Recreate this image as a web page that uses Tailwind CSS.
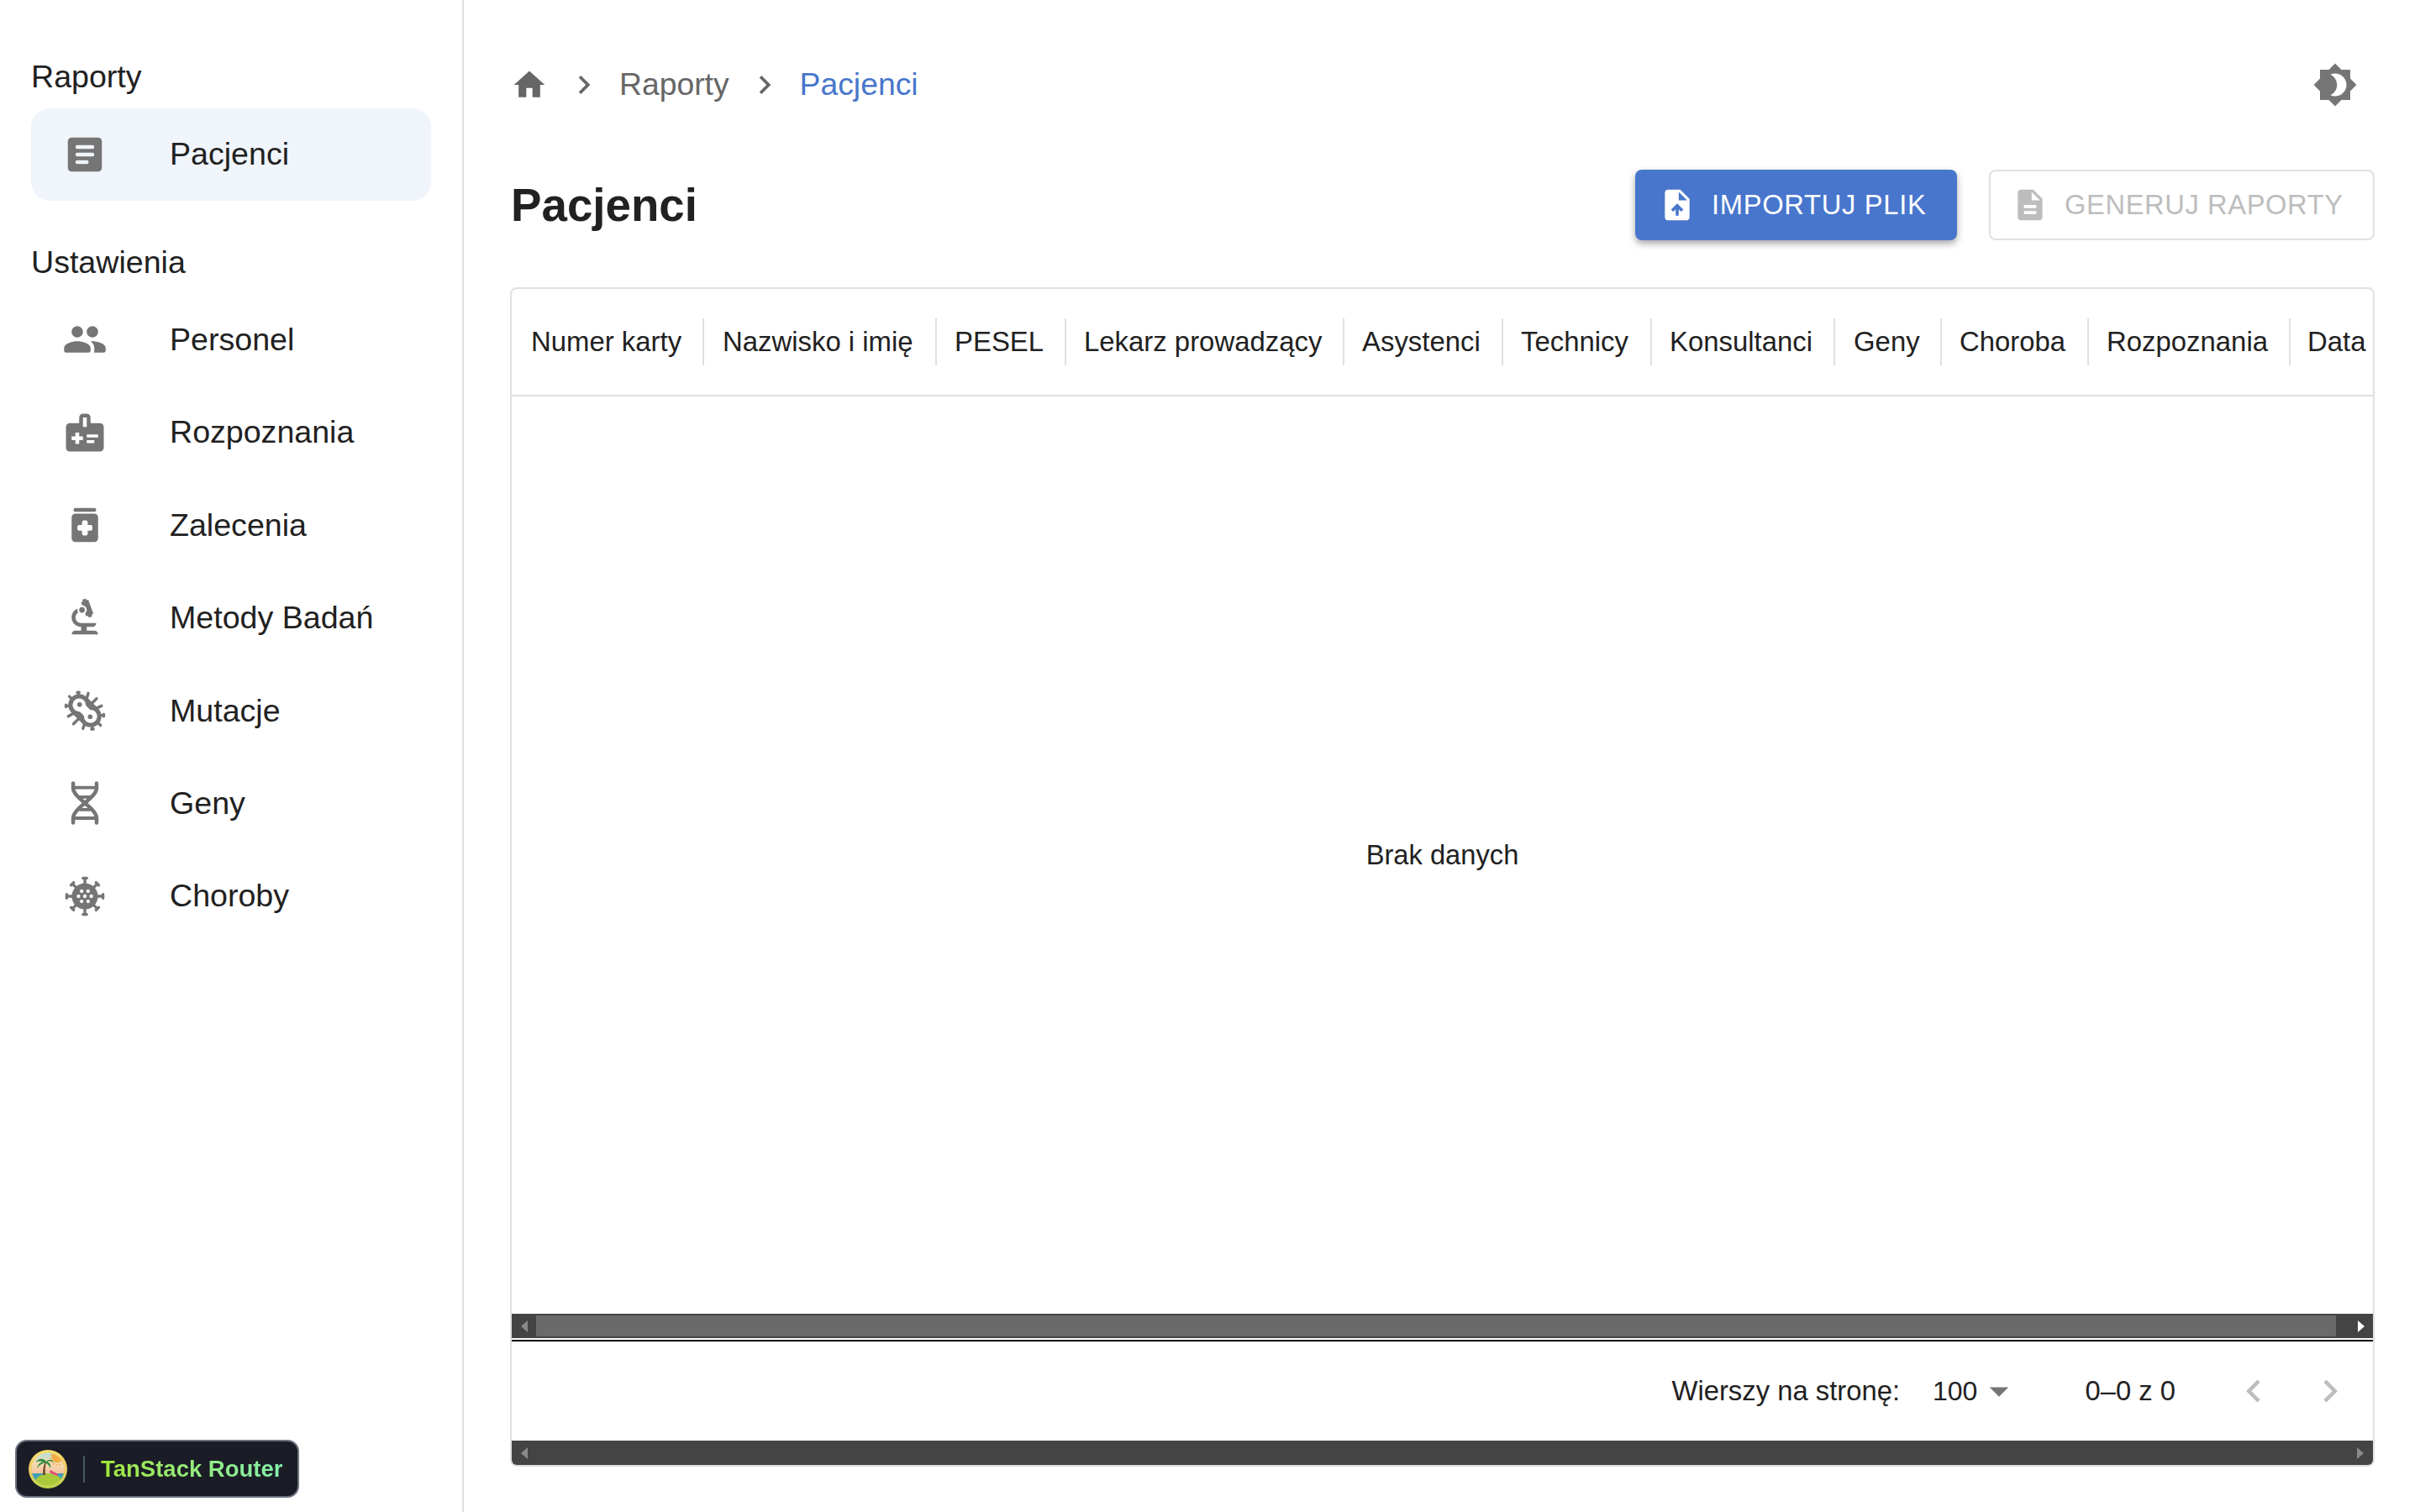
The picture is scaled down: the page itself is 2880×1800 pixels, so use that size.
<!DOCTYPE html>
<html lang="pl">
<head>
<meta charset="utf-8">
<title>Pacjenci</title>
<script src="https://cdn.jsdelivr.net/npm/@tailwindcss/browser@4"></script>
</head>
<body class="bg-white font-['Liberation_Sans',Arial,sans-serif] text-[#212121]">
<div class="flex h-[1800px] w-[2880px] overflow-hidden">
  <aside class="w-[552px] h-full shrink-0 border-r-2 border-[#e0e0e0] pt-[54px] pl-[37px] pr-[37px] text-[37.600px]">
    <div class="h-[74px] flex items-center">Raporty</div>
    <div class="h-[110px] mt-[1px] rounded-[22px] bg-[#f0f4fb] flex items-center pl-[37px] gap-[74px]">
      <svg class="w-[54px] h-[54px] shrink-0" viewBox="0 0 24 24" fill="#757575"><path fill-rule="evenodd" d="M19 3H5c-1.1 0-2 .9-2 2v14c0 1.100.9 2 2 2h14c1.100 0 2-.9 2-2V5c0-1.100-.9-2-2-2zM8 7h8a1 1 0 0 1 0 2H8a1 1 0 0 1 0-2zm0 4h8a1 1 0 0 1 0 2H8a1 1 0 0 1 0-2zm0 4h5a1 1 0 0 1 0 2H8a1 1 0 0 1 0-2z"/></svg>
      <span class="mb-[1px]">Pacjenci</span>
    </div>
    <div class="h-[74px] mt-[36px] flex items-center">Ustawienia</div>
    <div class="h-[110.400px] flex items-center pl-[37px] gap-[74px]">
      <svg class="w-[54px] h-[54px] shrink-0" viewBox="0 0 24 24" fill="#757575"><path d="M16 11c1.660 0 2.990-1.340 2.990-3S17.660 5 16 5s-3 1.340-3 3 1.340 3 3 3m-8 0c1.660 0 2.990-1.340 2.990-3S9.660 5 8 5 5 6.340 5 8s1.340 3 3 3m0 2c-2.330 0-7 1.170-7 3.500V18c0 .55.45 1 1 1h12c.55 0 1-.45 1-1v-1.500C15 14.170 10.330 13 8 13m8 0c-.29 0-.62.02-.97.05.02.01.03.03.04.04 1.140.83 1.930 1.940 1.930 3.410V18c0 .35-.07.69-.18 1H22c.55 0 1-.45 1-1v-1.500c0-2.330-4.670-3.500-7-3.500"/></svg>
      <span>Personel</span>
    </div>
    <div class="h-[110.400px] flex items-center pl-[37px] gap-[74px]">
      <svg class="w-[54px] h-[54px] shrink-0" viewBox="0 0 24 24" fill="#757575"><path fill-rule="evenodd" d="M20 7h-5V4c0-1.100-.9-2-2-2h-2c-1.100 0-2 .9-2 2v3H4c-1.100 0-2 .9-2 2v11c0 1.100.9 2 2 2h16c1.100 0 2-.9 2-2V9c0-1.100-.9-2-2-2zM11 4h2v5h-2V4zm0 12H9v2H7v-2H5v-2h2v-2h2v2h2v2zm2-1.500V13h6v1.500h-6zm0 3V16h4v1.500h-4z"/></svg>
      <span>Rozpoznania</span>
    </div>
    <div class="h-[110.400px] flex items-center pl-[37px] gap-[74px]">
      <svg class="w-[54px] h-[54px] shrink-0" viewBox="0 0 24 24"><rect x="6" y="3" width="12" height="2" rx="1" fill="#757575"/><rect x="5" y="6" width="14" height="15" rx="2" fill="#757575"/><rect x="10.500" y="9.500" width="3" height="8" rx="1" fill="#fff"/><rect x="8" y="12" width="8" height="3" rx="1" fill="#fff"/></svg>
      <span>Zalecenia</span>
    </div>
    <div class="h-[110.400px] flex items-center pl-[37px] gap-[74px]">
      <svg class="w-[54px] h-[54px] shrink-0" viewBox="0 0 24 24" fill="#757575"><path d="M7 19c-1.100 0-2 .9-2 2h14c0-1.100-.9-2-2-2h-4v-2h3c1.100 0 2-.9 2-2h-8c-1.660 0-3-1.340-3-3 0-1.090.59-2.040 1.460-2.560C8.170 9.030 8 8.540 8 8c0-.21.04-.42.09-.62C6.280 8.130 5 9.920 5 12c0 2.760 2.240 5 5 5v2H7z"/><path d="M10.560 5.510C11.910 5.540 13 6.640 13 8c0 .75-.33 1.410-.85 1.870l.59 1.620.94-.34.34.94 1.880-.68-.34-.94.94-.34-2.740-7.520-.94.34-.34-.94-1.880.68.34.94-.94.35.56 1.530z"/><circle cx="10.500" cy="8" r="1.500"/></svg>
      <span>Metody Badań</span>
    </div>
    <div class="h-[110.400px] flex items-center pl-[37px] gap-[74px]">
      <svg class="w-[54px] h-[54px] shrink-0" viewBox="0 0 24 24"><g stroke="#757575" stroke-width="1.500" stroke-linecap="round" fill="none"><path d="M8.500 2.300v3M8 2.300h1M3.800 4.500l2.200 2.200M2 9.500h3M2 9v1M3.200 15l3-1.700M6 19l2.400-2.400M11 21.500l1-3M16 21.800v-3M15.500 21.800h1M20.300 19.800l-2.300-2.300M22 14.500h-3M22 14v1M20.800 9.500l-3 1.400M18.200 5.600l-2.400 2.400M13.800 2.800l-1 3.200"/></g><path d="M9 9L15 15" stroke="#757575" stroke-width="11.500" stroke-linecap="round"/><path d="M9.500 9.500L14.500 14.500" stroke="#fff" stroke-width="4.600" stroke-linecap="round"/><circle cx="9" cy="9" r="3.500" fill="#fff"/><circle cx="15" cy="15" r="3.500" fill="#fff"/><circle cx="9.200" cy="8.800" r="1.250" fill="#757575"/><circle cx="14.800" cy="15.200" r="1.250" fill="#757575"/></svg>
      <span>Mutacje</span>
    </div>
    <div class="h-[110.400px] flex items-center pl-[37px] gap-[74px]">
      <svg class="w-[54px] h-[54px] shrink-0" viewBox="0 0 24 24" fill="none" stroke="#757575" stroke-width="2" stroke-linecap="round"><path d="M5.800 1.600V4C5.800 9.500 18.200 14.500 18.200 20V22.400"/><path d="M18.200 1.600V4C18.200 9.500 5.800 14.500 5.800 20V22.400"/><path d="M6.500 3.800h11M9 8.800h6M9 15.500h6M6.500 20h11" stroke-linecap="butt" stroke-width="1.700"/></svg>
      <span>Geny</span>
    </div>
    <div class="h-[110.400px] flex items-center pl-[37px] gap-[74px]">
      <svg class="w-[54px] h-[54px] shrink-0" viewBox="0 0 24 24"><g stroke="#757575" stroke-width="1.500" stroke-linecap="round"><path d="M12 3v18M3 12h18M5.600 5.600l12.800 12.800M18.400 5.600L5.600 18.400"/><path d="M11 2.400h2M11 21.600h2M2.400 11v2M21.600 11v2M4.700 6.100l1.400-1.400M17.900 19.300l1.400-1.400M17.900 4.700l1.400 1.400M4.700 17.900l1.400 1.400"/></g><circle cx="12" cy="12" r="6.900" fill="#757575"/><g fill="#fff"><circle cx="10.300" cy="9.300" r=".95"/><circle cx="13.700" cy="9.300" r=".95"/><circle cx="8.600" cy="12" r=".95"/><circle cx="12" cy="12" r=".95"/><circle cx="15.400" cy="12" r=".95"/><circle cx="10.300" cy="14.700" r=".95"/><circle cx="13.700" cy="14.700" r=".95"/></g></svg>
      <span>Choroby</span>
    </div>
  </aside>

  <main class="flex-1 min-w-0 pt-[74px] pl-[55px] pr-[54px]">
    <div class="h-[54px] flex items-center justify-between">
      <nav class="flex items-center text-[37.300px] text-[#666666]">
        <svg class="w-[44px] h-[44px] shrink-0 ml-[1px]" viewBox="0 0 24 24" fill="#666666"><path d="M10 20v-6h4v6h5v-8h3L12 3 2 12h3v8z"/></svg>
        <svg class="w-[44px] h-[44px] shrink-0 ml-[21px]" viewBox="0 0 24 24" fill="#666666"><path d="M10 6 8.590 7.410 13.170 12l-4.580 4.590L10 18l6-6z"/></svg>
        <span class="ml-[20px]">Raporty</span>
        <svg class="w-[44px] h-[44px] shrink-0 ml-[20px]" viewBox="0 0 24 24" fill="#666666"><path d="M10 6 8.590 7.410 13.170 12l-4.580 4.590L10 18l6-6z"/></svg>
        <span class="ml-[20px] text-[#4876cc]">Pacjenci</span>
      </nav>
      <svg class="w-[54px] h-[54px] shrink-0 mr-[20px]" viewBox="0 0 24 24" fill="#757575"><path fill-rule="evenodd" d="M20 8.690V4h-4.690L12 .69 8.690 4H4v4.690L.69 12 4 15.310V20h4.690L12 23.310 15.310 20H20v-4.690L23.310 12 20 8.690zM12 18c-.89 0-1.740-.2-2.500-.55C11.560 16.500 13 14.420 13 12s-1.440-4.500-3.500-5.450C10.260 6.200 11.110 6 12 6c3.310 0 6 2.690 6 6s-2.690 6-6 6z"/></svg>
    </div>

    <div class="mt-[74px] h-[84px] flex items-center">
      <h1 class="text-[54.700px] font-bold mr-auto ml-[1px] leading-[82px]">Pacjenci</h1>
      <button class="h-[84px] w-[383px] rounded-[8px] bg-[#4876cc] text-white text-[32.700px] tracking-[0.7px] flex items-center pl-[28px] gap-[19px] shadow-[0_4px_8px_rgba(0,0,0,0.35)]">
        <svg class="w-[44px] h-[44px] shrink-0" viewBox="0 0 24 24" fill="#fff"><path fill-rule="evenodd" d="M14 2H6c-1.100 0-1.990.9-1.990 2L4 20c0 1.100.89 2 1.990 2H18c1.100 0 2-.9 2-2V8l-6-6zm-1 7V3.500L18.500 9H13zm0 10h-2v-4.160l-1.590 1.590L8 15.010 12.010 11 16 15.010l-1.410 1.410L13 14.840V19z"/></svg>
        IMPORTUJ PLIK
      </button>
      <button class="h-[84px] w-[459px] ml-[38px] rounded-[8px] border-2 border-[#e0e0e0] text-[#bdbdbd] text-[32.700px] tracking-[0.6px] flex items-center pl-[25px] gap-[19px]">
        <svg class="w-[44px] h-[44px] shrink-0" viewBox="0 0 24 24" fill="#bdbdbd"><path fill-rule="evenodd" d="M14 2H6c-1.100 0-1.990.9-1.990 2L4 20c0 1.100.89 2 1.990 2H18c1.100 0 2-.9 2-2V8l-6-6zm2 16H8v-2h8v2zm0-4H8v-2h8v2zm-3-5V3.500L18.500 9H13z"/></svg>
        GENERUJ RAPORTY
      </button>
    </div>

    <section class="mt-[56px] h-[1404px] border-2 border-[#e0e0e0] rounded-[8px] flex flex-col overflow-hidden">
      <div class="h-[128px] shrink-0 border-b-2 border-[#e0e0e0] flex items-center overflow-hidden text-[32.900px] whitespace-nowrap">
        <div class="w-[229px] h-[56px] shrink-0 pl-[23px] border-r-2 border-[#e0e0e0] flex items-center">Numer karty</div>
        <div class="w-[277px] h-[56px] shrink-0 pl-[22px] border-r-2 border-[#e0e0e0] flex items-center">Nazwisko i imię</div>
        <div class="w-[154px] h-[56px] shrink-0 pl-[21px] border-r-2 border-[#e0e0e0] flex items-center">PESEL</div>
        <div class="w-[331px] h-[56px] shrink-0 pl-[21px] border-r-2 border-[#e0e0e0] flex items-center">Lekarz prowadzący</div>
        <div class="w-[189px] h-[56px] shrink-0 pl-[21px] border-r-2 border-[#e0e0e0] flex items-center">Asystenci</div>
        <div class="w-[177px] h-[56px] shrink-0 pl-[21px] border-r-2 border-[#e0e0e0] flex items-center">Technicy</div>
        <div class="w-[218px] h-[56px] shrink-0 pl-[21px] border-r-2 border-[#e0e0e0] flex items-center">Konsultanci</div>
        <div class="w-[127px] h-[56px] shrink-0 pl-[22px] border-r-2 border-[#e0e0e0] flex items-center">Geny</div>
        <div class="w-[175px] h-[56px] shrink-0 pl-[21px] border-r-2 border-[#e0e0e0] flex items-center">Choroba</div>
        <div class="w-[240px] h-[56px] shrink-0 pl-[21px] border-r-2 border-[#e0e0e0] flex items-center">Rozpoznania</div>
        <div class="h-[56px] shrink-0 pl-[20px] flex items-center">Data</div>
      </div>
      <div class="h-[1092px] shrink-0 flex items-center justify-center text-[32.700px]">Brak danych</div>
      <div class="h-[29px] shrink-0 bg-[#444444] flex items-center">
        <div class="w-[29px] h-full shrink-0 flex items-center justify-center"><svg class="w-[8px] h-[14px]" viewBox="0 0 8 14" fill="#8a8a8a"><path d="M8 0v14L0 7z"/></svg></div>
        <div class="flex-1 h-[25px] bg-[#6a6a6a]"></div>
        <div class="w-[44px] h-full shrink-0 flex items-center pl-[26px]"><svg class="w-[8px] h-[14px]" viewBox="0 0 8 14" fill="#ffffff"><path d="M0 0v14L8 7z"/></svg></div>
      </div>
      <div class="h-[2px] shrink-0 bg-white"></div>
      <div class="h-[2px] shrink-0 bg-black"></div>
      <div class="h-[118px] shrink-0 flex items-center justify-end pr-[24px] text-[32.800px]">
        <span>Wierszy na stronę:</span>
        <span class="ml-[39px] text-[32px]">100</span>
        <svg class="w-[54px] h-[54px] shrink-0 ml-[-1px]" viewBox="0 0 24 24" fill="#757575"><path d="M7 10l5 5 5-5z"/></svg>
        <span class="ml-[75px]">0–0 z 0</span>
        <svg class="w-[54px] h-[54px] shrink-0 ml-[66px]" viewBox="0 0 24 24" fill="#bdbdbd"><path d="M15.410 16.590 10.830 12l4.580-4.590L14 6l-6 6 6 6 1.410-1.410z"/></svg>
        <svg class="w-[54px] h-[54px] shrink-0 ml-[37px]" viewBox="0 0 24 24" fill="#bdbdbd"><path d="M8.590 16.590 13.170 12 8.590 7.410 10 6l6 6-6 6-1.410-1.410z"/></svg>
      </div>
      <div class="h-[29px] shrink-0 bg-[#444444] flex items-center justify-between pl-[11px] pr-[11px]">
        <svg class="w-[8px] h-[14px]" viewBox="0 0 8 14" fill="#8a8a8a"><path d="M8 0v14L0 7z"/></svg>
        <svg class="w-[8px] h-[14px]" viewBox="0 0 8 14" fill="#8a8a8a"><path d="M0 0v14L8 7z"/></svg>
      </div>
    </section>
  </main>
</div>

<div class="fixed left-[18px] top-[1714px] w-[338px] h-[69px] rounded-[14px] border-2 border-[#6b7280] bg-[#1a1d25] flex items-center pl-[14px]">
  <svg class="w-[46px] h-[46px] shrink-0" viewBox="0 0 46 46">
    <defs>
      <clipPath id="logo-clip"><circle cx="23" cy="23" r="19.500"/></clipPath>
      <linearGradient id="logo-sky" x1="0" y1="0" x2="0" y2="1"><stop offset="0" stop-color="#a9dfe6"/><stop offset="0.35" stop-color="#f3dcb4"/><stop offset="0.7" stop-color="#f6b994"/><stop offset="1" stop-color="#f29a8a"/></linearGradient>
      <linearGradient id="logo-ring" x1="0" y1="0" x2="0" y2="1"><stop offset="0" stop-color="#f5e06a"/><stop offset="0.5" stop-color="#f2c96a"/><stop offset="1" stop-color="#b9d84a"/></linearGradient>
    </defs>
    <circle cx="23" cy="23" r="23" fill="url(#logo-ring)"/>
    <g clip-path="url(#logo-clip)">
      <rect width="46" height="46" fill="url(#logo-sky)"/>
      <circle cx="34" cy="10" r="8" fill="none" stroke="#f4a93c" stroke-width="1.500" stroke-dasharray="2 2"/>
      <circle cx="34" cy="9" r="6.500" fill="#f4ad42"/>
      <rect y="28" width="46" height="8" fill="#3f9fb5"/>
      <ellipse cx="24" cy="41" rx="17" ry="13" fill="#a9c93a"/>
      <path d="M26 24l9 5-1 2-9-4z" fill="#e8487a"/>
      <path d="M17 30c0-6 .5-11 3-16l1.500.5C19.500 19 19.500 25 20 30z" fill="#6b4a2b"/>
      <path d="M21 14C17 9 12 10 8 15c4-2 7-2 9-.5C13 15 11 18 10 22c3-4 6-6 10-7 3 2 5 4 6 7 1-4-1-7-4-8 2-1 5-1 8 1-2-4-6-4-9-1z" fill="#2f8a3c"/>
    </g>
  </svg>
  <div class="w-[2px] h-[32px] bg-[#4b5563] ml-[19px] shrink-0"></div>
  <span class="ml-[19px] text-[27.500px] font-bold whitespace-nowrap bg-linear-to-r from-[#a3e635] to-[#86efac] bg-clip-text text-transparent">TanStack Router</span>
</div>
</body>
</html>
